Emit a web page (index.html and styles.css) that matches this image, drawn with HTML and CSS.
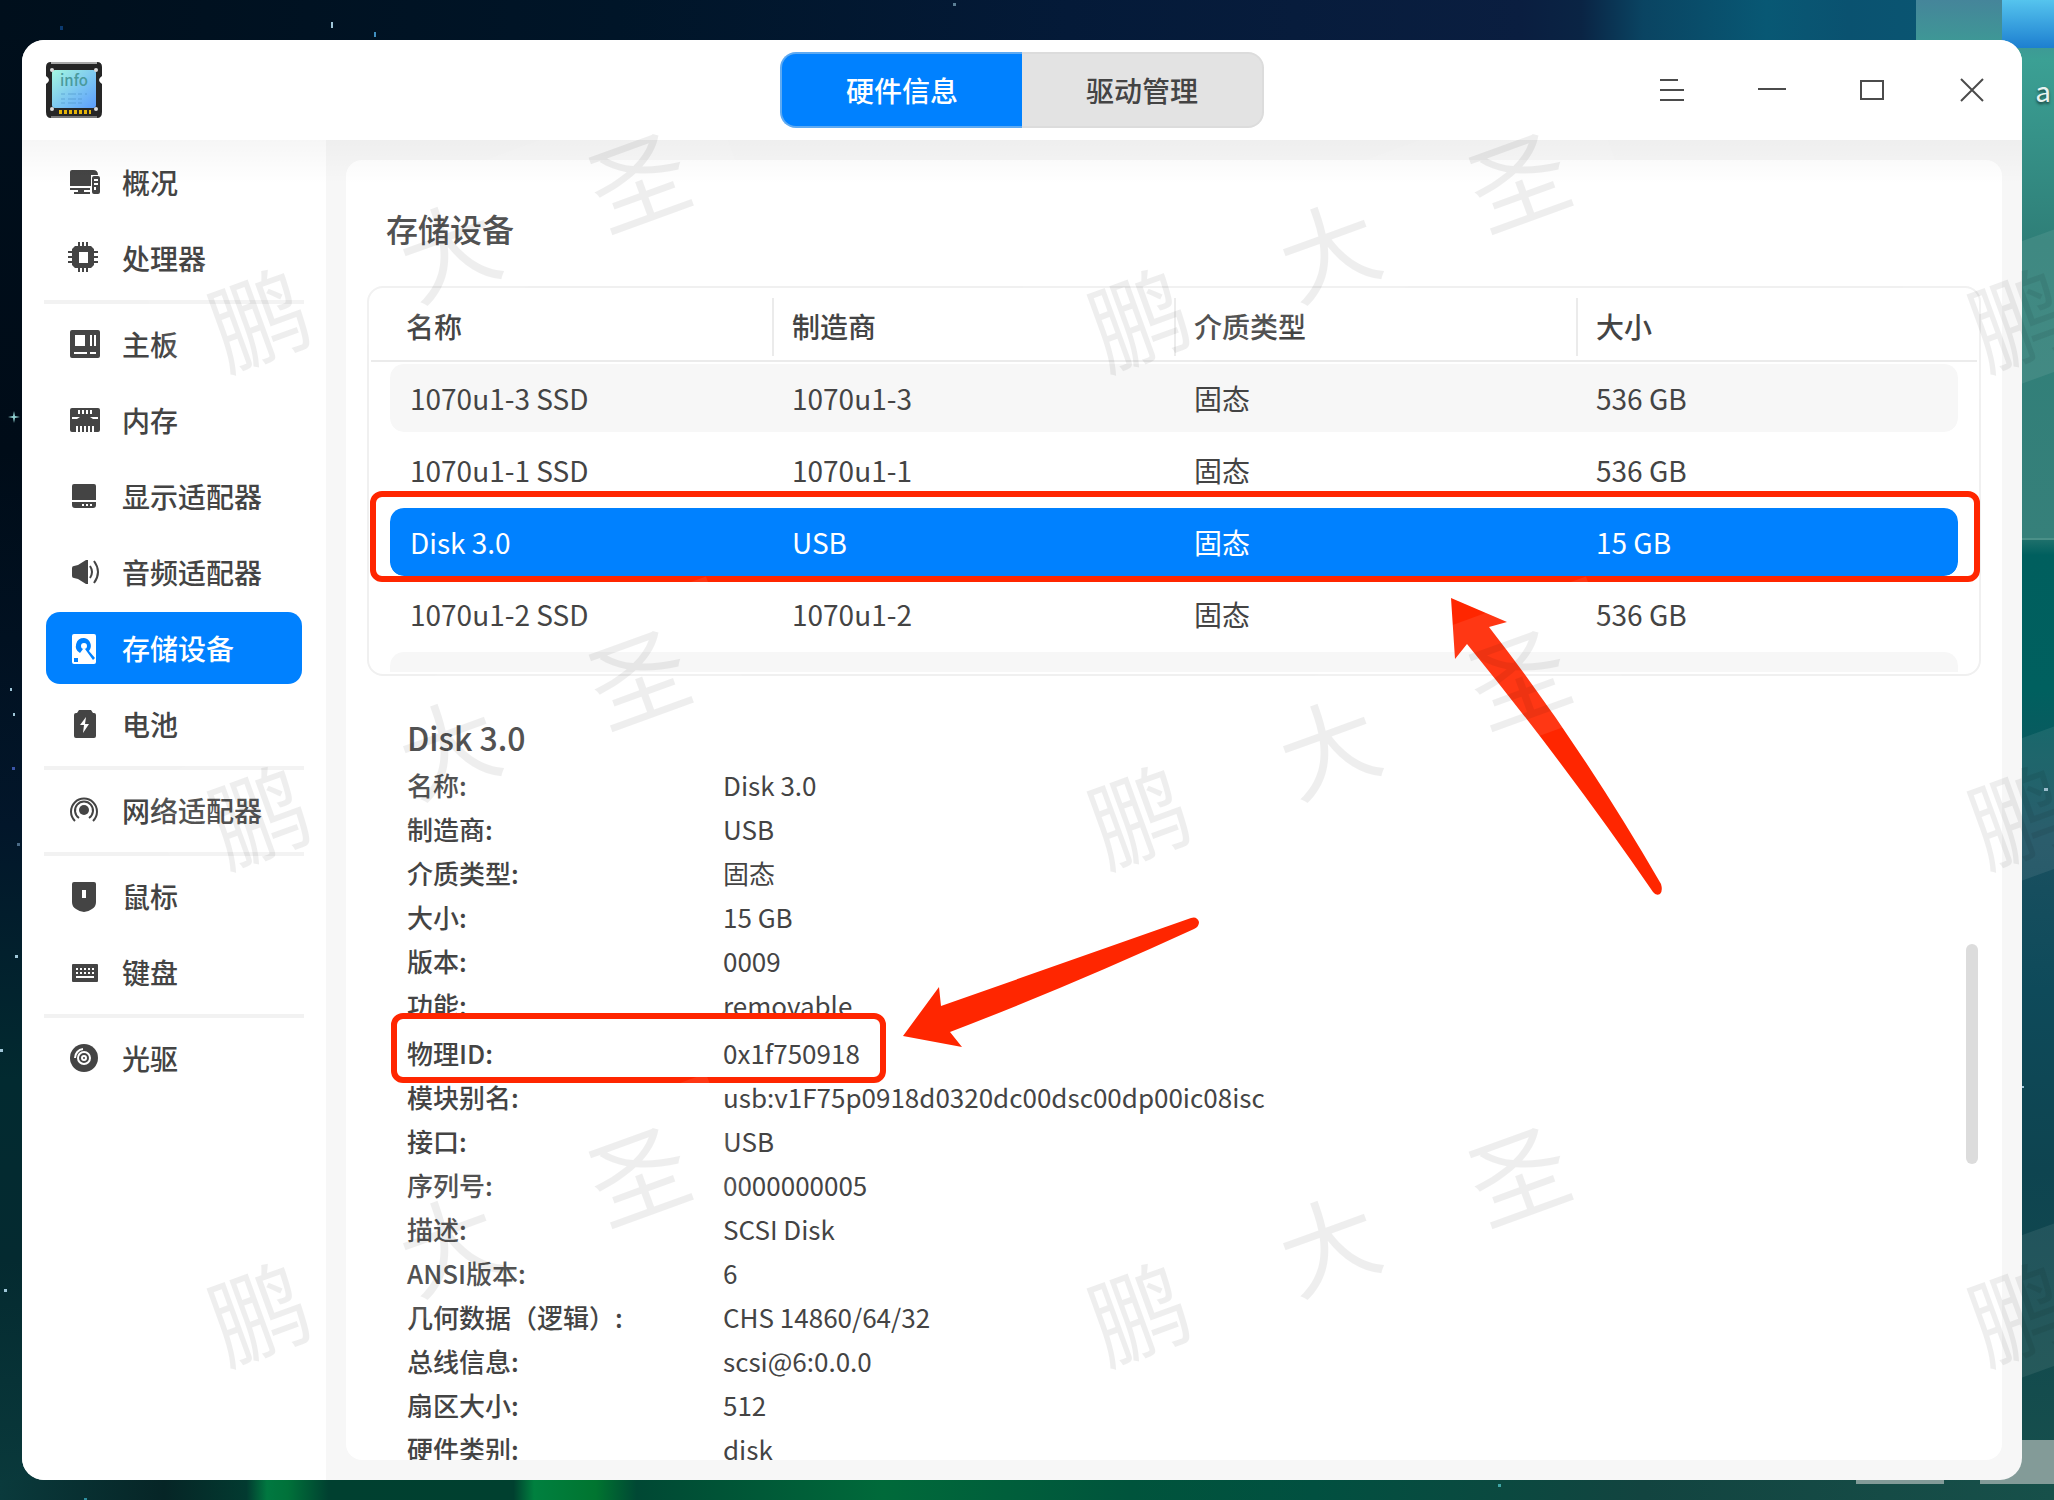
FILE: index.html
```html
<!DOCTYPE html>
<html lang="zh-CN">
<head>
<meta charset="utf-8">
<title>设备管理器</title>
<link rel="stylesheet" href="styles.css">
</head>
<body>
<div class="desktop">
  <svg class="stars" width="100%" height="100%" aria-hidden="true">
    <g fill="#9fc6d8">
      <rect x="331" y="22" width="2" height="6"/><rect x="374" y="32" width="2" height="5" fill="#3f8fc0"/>
      <rect x="60" y="26" width="3" height="4" fill="#0b3a70"/><rect x="953" y="3" width="3" height="3" fill="#5b7f95"/>
      <path d="M14 411l1 5 5 1-5 1-1 5-1-5-5-1 5-1z" fill="#8fd0d0"/>
      <rect x="10" y="688" width="2" height="3"/><rect x="13" y="713" width="2" height="3"/>
      <rect x="12" y="767" width="3" height="3" fill="#3b55a8"/><rect x="17" y="843" width="3" height="3" fill="#4a6a86"/>
      <rect x="15" y="955" width="3" height="3"/><rect x="0" y="1049" width="3" height="3"/>
      <rect x="4" y="1289" width="3" height="3"/><rect x="84" y="1498" width="3" height="2" fill="#2f8f9f"/>
      <rect x="2044" y="788" width="4" height="3"/><rect x="2022" y="1086" width="2" height="2"/>
      <rect x="1498" y="1484" width="3" height="3" fill="#3fa5a5"/>
    </g>
  </svg>
  <div class="backdrop-panel"></div>
  <div class="backdrop-tile"></div>
  <div class="backdrop-dock"></div>
  <div class="backdrop-dock-item"></div>
  <span class="desktop-label">a</span>

  <div class="window">
    <header class="titlebar">
      <svg class="app-icon" viewBox="0 0 56 56" aria-hidden="true">
        <defs><linearGradient id="screen" x1="0" y1="0" x2="1" y2="1"><stop offset="0" stop-color="#a4f8e0"/><stop offset="1" stop-color="#5b9dff"/></linearGradient></defs>
        <path d="M5 0h46q5 0 5 5v9q-3 2-3 4t3 4v28q0 6-5 6H5q-5 0-5-6V22q3-2 3-4t-3-4V5q0-5 5-5z" fill="#262626"/>
        <path d="M5 1h46" stroke="#aaa" stroke-width="2"/><path d="M5 55h46" stroke="#777" stroke-width="2"/>
        <rect x="6" y="8" width="44" height="38" rx="3" fill="url(#screen)"/>
        <g fill="#ddd"><circle cx="6" cy="8" r="2"/><circle cx="50" cy="8" r="2"/><circle cx="6" cy="47" r="2"/><circle cx="50" cy="47" r="2"/></g>
        <path d="M13 50h32" stroke="#e5b50a" stroke-width="4" stroke-dasharray="3 2"/>
        <text x="28" y="24" text-anchor="middle" class="app-icon-text">info</text>
        <path d="M15 32h26M15 37h22M15 41h22" stroke="#4a92c8" stroke-width="2" stroke-dasharray="4 3 8 2" opacity=".3"/>
      </svg>
      <div class="tabs">
        <button class="tab tab-active" type="button">硬件信息</button>
        <button class="tab" type="button">驱动管理</button>
      </div>
      <div class="window-controls">
        <button type="button" aria-label="菜单"><svg viewBox="0 0 28 28"><path d="M2 4h18M2 14h24M2 24h24"/></svg></button>
        <button type="button" aria-label="最小化"><svg viewBox="0 0 28 28"><path d="M0 13h28"/></svg></button>
        <button type="button" aria-label="最大化"><svg viewBox="0 0 28 28"><path d="M3 5h22v18H3z"/></svg></button>
        <button type="button" aria-label="关闭"><svg viewBox="0 0 28 28"><path d="M3 3l22 22M25 3L3 25"/></svg></button>
      </div>
    </header>

    <div class="content">
      <nav class="sidebar">
        <a class="nav-item" href="#"><svg viewBox="0 0 30 30"><path d="M2 3h21q5 0 5 5h-7v11H0V5q0-2 2-2z"/><path d="M0 21h20v2H0zM8 23h6v2H8zM4 25h16v2H4z"/><path fill-rule="evenodd" d="M24 9h4q2 0 2 2v14q0 2-2 2h-4q-2 0-2-2V11q0-2 2-2zM24 12v2h4v-2zM24 16v2h4v-2zM24 20v3h2v-3z"/></svg>概况</a>
        <a class="nav-item" href="#"><svg viewBox="0 0 30 30"><path fill-rule="evenodd" d="M5 3h16l3 3v16l-3 3H5l-3-3V6zM9 9v11h9V9z"/><path d="M8-1h2v5H8zM8 24h2v5H8zM12-1h2v5h-2zM16-1h2v5h-2zM12 24h2v5h-2zM16 24h2v5h-2zM-2 8h5v2h-5zM-2 13h5v2h-5zM-2 18h5v2h-5zM23 8h5v2h-5zM23 13h5v2h-5zM23 18h5v2h-5z"/></svg>处理器</a>
        <hr>
        <a class="nav-item" href="#"><svg viewBox="0 0 30 30"><path fill-rule="evenodd" d="M2 1h26q2 0 2 2v24q0 2-2 2H2q-2 0-2-2V3q0-2 2-2zM5 6v11h10V6zM20 6v11h2V6zM24 6v11h2V6zM4 23v2h13v-2zM20 23v2h6v-2z"/></svg>主板</a>
        <a class="nav-item" href="#"><svg viewBox="0 0 30 30"><path fill-rule="evenodd" d="M2 3h26q2 0 2 2v20q0 2-2 2H2q-2 0-2-2V5q0-2 2-2zM8 5v4h2V5zM12 5v4h2V5zM16 5v4h2V5zM20 5v4h2V5zM2 12v2h5l3-2zM28 12v2h-5l-3-2zM6 21v6h2v-6zM10 21v6h2v-6zM14 21v6h2v-6zM18 21v6h2v-6zM22 21v6h2v-6z"/></svg>内存</a>
        <a class="nav-item" href="#"><svg viewBox="0 0 30 30"><path fill-rule="evenodd" d="M4 3h20q2 0 2 2v14H2V5q0-2 2-2zM2 21h24v3q0 3-3 3H5q-3 0-3-3zM12 23v2h2v-2zM16 23v2h2v-2zM20 23v2h2v-2z"/></svg>显示适配器</a>
        <a class="nav-item" href="#"><svg viewBox="0 0 30 30"><path d="M4 9l4-1 8-5h2v24h-2l-8-5-4-1q-2 0-2-2v-8q0-2 2-2z"/><path class="line" d="M20 9q4 6 0 12M24 4q8 11 0 22"/></svg>音频适配器</a>
        <a class="nav-item nav-active" href="#" aria-current="page"><svg viewBox="0 0 30 30"><path fill-rule="evenodd" d="M4 1h20q2 0 2 2v26q0 2-2 2H4q-2 0-2-2V3q0-2 2-2zM14 5a8 8 0 0 0-4 15l3-4 2 0 8 11 2-2-6-7A8 8 0 0 0 14 5zM14 10a3 3 0 0 1 0 6 3 3 0 0 1 0-6zM4 25v4h4v-4z"/></svg>存储设备</a>
        <a class="nav-item" href="#"><svg viewBox="0 0 30 30"><path fill-rule="evenodd" d="M9 1h12l2 3h1q2 0 2 2v21q0 2-2 2H6q-2 0-2-2V6q0-2 2-2h1zM16 8l-6 8h4l-1 8 6-9h-4l1-7z"/></svg>电池</a>
        <hr>
        <a class="nav-item" href="#"><svg viewBox="0 0 30 30"><circle cx="14" cy="15" r="5"/><path class="line" d="M9 23a9 9 0 1 1 10 0M5 26a13 13 0 1 1 18 0"/></svg>网络适配器</a>
        <hr>
        <a class="nav-item" href="#"><svg viewBox="0 0 30 30"><path fill-rule="evenodd" d="M4 1h20q2 0 2 2v18q0 5-4 7-8 6-16 0-4-2-4-7V3q0-2 2-2zM12 9v8h4V9z"/></svg>鼠标</a>
        <a class="nav-item" href="#"><svg viewBox="0 0 30 30"><path fill-rule="evenodd" d="M3 7h24q1 0 1 1v16q0 1-1 1H3q-1 0-1-1V8q0-1 1-1zM6 11v2h2v-2zM10 11v2h2v-2zM14 11v2h2v-2zM18 11v2h2v-2zM22 11v2h2v-2zM6 15v2h2v-2zM10 15v2h2v-2zM14 15v2h2v-2zM18 15v2h2v-2zM22 15v2h2v-2zM6 19v2h18v-2z"/></svg>键盘</a>
        <hr>
        <a class="nav-item" href="#"><svg viewBox="0 0 30 30"><circle cx="14" cy="15" r="14"/><g class="cut"><circle cx="14" cy="15" r="6"/><circle cx="14" cy="15" r="2"/><path d="M5 15a9 9 0 0 1 8-9"/></g></svg>光驱</a>
      </nav>

      <main class="panel">
        <h1>存储设备</h1>
        <div class="device-card">
          <div class="device-scroll">
            <table class="devices">
              <colgroup><col class="col-name"><col class="col-mid"><col class="col-mid"><col></colgroup>
              <thead><tr><th scope="col">名称</th><th scope="col">制造商</th><th scope="col">介质类型</th><th scope="col">大小</th></tr></thead>
              <tbody>
                <tr class="striped"><td>1070u1-3 SSD</td><td>1070u1-3</td><td>固态</td><td>536 GB</td></tr>
                <tr><td>1070u1-1 SSD</td><td>1070u1-1</td><td>固态</td><td>536 GB</td></tr>
                <tr class="selected"><td>Disk 3.0</td><td>USB</td><td>固态</td><td>15 GB</td></tr>
                <tr><td>1070u1-2 SSD</td><td>1070u1-2</td><td>固态</td><td>536 GB</td></tr>
                <tr class="striped"><td></td><td></td><td></td><td></td></tr>
              </tbody>
            </table>
          </div>
          <div class="mark mark-row"></div>
        </div>

        <section class="details">
          <h2>Disk 3.0</h2>
          <table class="props">
            <tbody>
              <tr><th scope="row">名称:</th><td>Disk 3.0</td></tr>
              <tr><th scope="row">制造商:</th><td>USB</td></tr>
              <tr><th scope="row">介质类型:</th><td>固态</td></tr>
              <tr><th scope="row">大小:</th><td>15 GB</td></tr>
              <tr><th scope="row">版本:</th><td>0009</td></tr>
              <tr><th scope="row">功能:</th><td>removable</td></tr>
              <tr class="marked"><th scope="row">物理ID:</th><td>0x1f750918</td></tr>
              <tr><th scope="row">模块别名:</th><td>usb:v1F75p0918d0320dc00dsc00dp00ic08isc</td></tr>
              <tr><th scope="row">接口:</th><td>USB</td></tr>
              <tr><th scope="row">序列号:</th><td>0000000005</td></tr>
              <tr><th scope="row">描述:</th><td>SCSI Disk</td></tr>
              <tr><th scope="row">ANSI版本:</th><td>6</td></tr>
              <tr><th scope="row">几何数据（逻辑）:</th><td>CHS 14860/64/32</td></tr>
              <tr><th scope="row">总线信息:</th><td>scsi@6:0.0.0</td></tr>
              <tr><th scope="row">扇区大小:</th><td>512</td></tr>
              <tr><th scope="row">硬件类别:</th><td>disk</td></tr>
            </tbody>
          </table>
          <div class="scroll-thumb"></div>
          <div class="mark mark-id"></div>
        </section>
      </main>
    </div>
  </div>

  <svg class="arrows" width="2054" height="1500" aria-hidden="true">
    <path d="M1451 598L1507 622L1489 627Q1580 744 1661 884Q1663 891 1660 894Q1656 896 1653 892Q1568 768 1467 644L1455 659Z"/>
    <path d="M903 1036L939 987L941 1006L1191 918Q1197 916 1199 922Q1199 927 1194 929Q1070 986 950 1032L962 1047Z"/>
  </svg>

  <div class="watermarks" aria-hidden="true">
    <div class="wm"><span>鹏</span><span>大</span><span>圣</span></div>
    <div class="wm"><span>鹏</span><span>大</span><span>圣</span></div>
    <div class="wm"><span>鹏</span><span>大</span><span>圣</span></div>
    <div class="wm"><span>鹏</span><span>大</span><span>圣</span></div>
    <div class="wm"><span>鹏</span><span>大</span><span>圣</span></div>
    <div class="wm"><span>鹏</span><span>大</span><span>圣</span></div>
    <div class="wm"><span>鹏</span><span>大</span><span>圣</span></div>
    <div class="wm"><span>鹏</span><span>大</span><span>圣</span></div>
    <div class="wm"><span>鹏</span><span>大</span><span>圣</span></div>
  </div>
</div>
</body>
</html>
```
FILE: styles.css
```css
* { box-sizing: border-box; }

body {
  margin: 0;
  font-family: "Noto Sans CJK SC", "Noto Sans", sans-serif;
  font-size: 28px;
  font-weight: 400;
  color: #444;
}

button {
  margin: 0;
  padding: 0;
  border: 0;
  background: none;
  font: inherit;
  color: inherit;
}

/* Desktop wallpaper: four edge strips round the window */
.desktop {
  position: relative;
  height: 100vh;
  padding: 40px 32px 20px 22px;
  overflow: hidden;
  background:
    linear-gradient(90deg, #000f1c, #001528 30%, #041a38 52%, #0a1e40 74%, #0a2444 77%, #0a4462 80%, #085874 86%, #0a5270 90%, #0a5a74) top / 100% 40px no-repeat,
    linear-gradient(90deg, #0a3a3c, #062526 8%, #023a30 12%, #007840 13%, #00723a 14%, #004030 16%, #00402f 25%, #00803f 26%, #007530 29%, #004834 31%, #006a3a 43%, #00543c 55%, #015040 64%, #124440 80%, #17504a) bottom / 100% 20px no-repeat,
    linear-gradient(#2f8078, #37998c 14%, #2f7f78 24%, #3a8078 35%, #005f5e 37%, #00605f 46%, #1a5060 56%, #0e4a5a 66%, #0e4450 78%, #17504c) right / 40px 100% no-repeat,
    linear-gradient(#000f1c, #000c18 30%, #02162a 55%, #022a30 72%, #042a30 84%, #0a3a3c);
}
.stars { position: absolute; inset: 0; }

.backdrop-panel {
  position: absolute;
  top: 0;
  right: 0;
  width: 138px;
  height: 540px;
  border-bottom: 2px solid #4b9088;
  background: linear-gradient(#45859a, #3ba094 60px, #2f7f78 240px, #36807a);
}
.backdrop-tile {
  position: absolute;
  top: 0;
  right: 0;
  width: 52px;
  height: 48px;
  background: linear-gradient(#55c4ee, #1d7fd0);
}
.backdrop-dock, .backdrop-dock-item {
  position: absolute;
  bottom: 16px;
  background: #839b98;
}
.backdrop-dock { right: 0; width: 74px; height: 44px; }
.backdrop-dock-item { right: 110px; width: 88px; height: 4px; }
.desktop-label {
  position: absolute;
  top: 70px;
  right: 3px;
  line-height: 40px;
  color: #e8f2f0;
  text-shadow: 0 2px 3px rgba(0, 0, 0, .6);
}

.window {
  position: relative;
  display: flex;
  flex-direction: column;
  height: 100%;
  border-radius: 22px;
  overflow: hidden;
  background: #f7f7f7;
}

/* Title bar */
.titlebar {
  display: grid;
  grid-template-columns: 1fr auto 1fr;
  align-items: center;
  flex: none;
  height: 100px;
  padding-left: 24px;
  background: #fff;
}
.app-icon { width: 56px; height: 56px; }
.app-icon-text { font-size: 15px; font-weight: 500; fill: #4a9a9c; }
.tabs {
  display: flex;
  margin-left: -24px;
  font-weight: 500;
}
.tab {
  width: 242px;
  height: 76px;
  background: #e3e3e3;
  border: solid #dcdcdc;
  border-width: 2px 2px 2px 0;
  border-radius: 0 16px 16px 0;
}
.tab-active {
  color: #fff;
  background: #0081ff;
  border-color: #5eaaf2;
  border-width: 2px 0 2px 2px;
  border-radius: 16px 0 0 16px;
}
.window-controls { display: flex; justify-content: flex-end; }
.window-controls button {
  display: grid;
  place-items: center;
  width: 100px;
  height: 100px;
}
.window-controls svg {
  width: 28px;
  height: 28px;
  fill: none;
  stroke: #4b4b4b;
  stroke-width: 2;
}

.content {
  position: relative;
  display: flex;
  flex: 1;
  min-height: 0;
}
.content::after {
  content: "";
  position: absolute;
  inset: 0 0 auto;
  height: 44px;
  background: linear-gradient(rgba(0, 0, 0, .036), rgba(0, 0, 0, 0));
  pointer-events: none;
}

/* Sidebar */
.sidebar {
  display: flex;
  flex-direction: column;
  gap: 4px;
  flex: none;
  width: 304px;
  padding: 6px 22px 0;
  background: #fff;
  font-weight: 500;
}
.nav-item {
  display: flex;
  align-items: center;
  gap: 22px;
  height: 72px;
  margin: 0 2px;
  padding-left: 24px;
  border-radius: 14px;
  color: inherit;
  text-decoration: none;
}
.nav-item svg {
  flex: none;
  width: 30px;
  height: 30px;
  overflow: visible;
  fill: currentColor;
}
.nav-item .line { fill: none; stroke: currentColor; stroke-width: 2; }
.nav-item .cut { fill: none; stroke: #fff; stroke-width: 2; }
.nav-active { color: #fff; background: #0081ff; }
.sidebar hr {
  width: 100%;
  height: 4px;
  margin: 2px 0 0;
  border: 0;
  background: #f2f2f2;
}

/* Main panel */
.panel {
  display: flex;
  flex-direction: column;
  flex: 1;
  min-width: 0;
  margin: 20px;
  padding-top: 44px;
  border-radius: 16px;
  overflow: hidden;
  background: #fff;
}
h1 {
  margin: 0 40px 34px;
  font-size: 32px;
  line-height: 48px;
  font-weight: 500;
}
.device-card {
  position: relative;
  flex: none;
  height: 390px;
  margin: 0 21px;
  border: 2px solid #f0f0f0;
  border-radius: 16px;
  background: linear-gradient(#ebebeb, #ebebeb) center 72px / calc(100% - 4px) 2px no-repeat;
}
.device-scroll {
  height: 384px;
  padding: 0 21px;
  overflow: hidden;
}
.devices {
  width: 100%;
  table-layout: fixed;
  border-collapse: separate;
  border-spacing: 0;
}
.col-name { width: 382px; }
.col-mid { width: 402px; }
.devices th, .devices td {
  height: 72px;
  padding: 0 0 0 20px;
  text-align: left;
  line-height: 40px;
}
.devices th { padding: 4px 0 0 16px; font-weight: 500; }
.devices th + th {
  padding-left: 20px;
  background: linear-gradient(#ebebeb, #ebebeb) 0 10px / 2px 58px no-repeat;
}
.devices td { border-top: 4px solid transparent; background-clip: padding-box; }
.devices td:first-child { border-radius: 14px 0 0 14px / 18px 0 0 14px; }
.devices td:last-child { border-radius: 0 14px 14px 0 / 0 18px 14px 0; }
.striped td { background-color: #f7f7f7; }
.selected td { background-color: #0081ff; color: #fff; }

/* Details */
.details {
  position: relative;
  flex: 1;
  min-height: 0;
  padding: 35px 61px 0;
  overflow: hidden;
}
h2 {
  margin: 0;
  font-size: 32px;
  line-height: 52px;
  font-weight: 500;
}
.props { border-collapse: collapse; font-size: 26px; }
.props th, .props td {
  height: 44px;
  padding: 0;
  line-height: 44px;
  text-align: left;
  white-space: nowrap;
}
.props th { width: 316px; font-weight: 500; }
.props .marked th, .props .marked td { padding-top: 4px; }
.scroll-thumb {
  position: absolute;
  top: 268px;
  right: 24px;
  width: 12px;
  height: 220px;
  border-radius: 6px;
  background: #dcdcdc;
}

/* Red annotations */
.mark {
  position: absolute;
  border: 6px solid #ff2600;
  border-radius: 12px;
}
.mark-row { top: 203px; left: 1px; right: -1px; height: 91px; }
.mark-id { top: 337px; left: 45px; width: 495px; height: 70px; }
.arrows {
  position: absolute;
  top: 0;
  left: 0;
  fill: #ff2600;
  pointer-events: none;
}

/* Repeating watermark */
.watermarks {
  position: absolute;
  top: 178px;
  left: 147px;
  display: grid;
  grid-template-columns: repeat(3, 600px);
  gap: 363px 280px;
  pointer-events: none;
}
.wm {
  display: flex;
  justify-content: center;
  gap: 104px;
  height: 134px;
  background: rgba(255, 255, 255, .08);
  color: rgba(0, 0, 0, .065);
  font-size: 98px;
  line-height: 134px;
  transform: rotate(-20deg);
}
```
